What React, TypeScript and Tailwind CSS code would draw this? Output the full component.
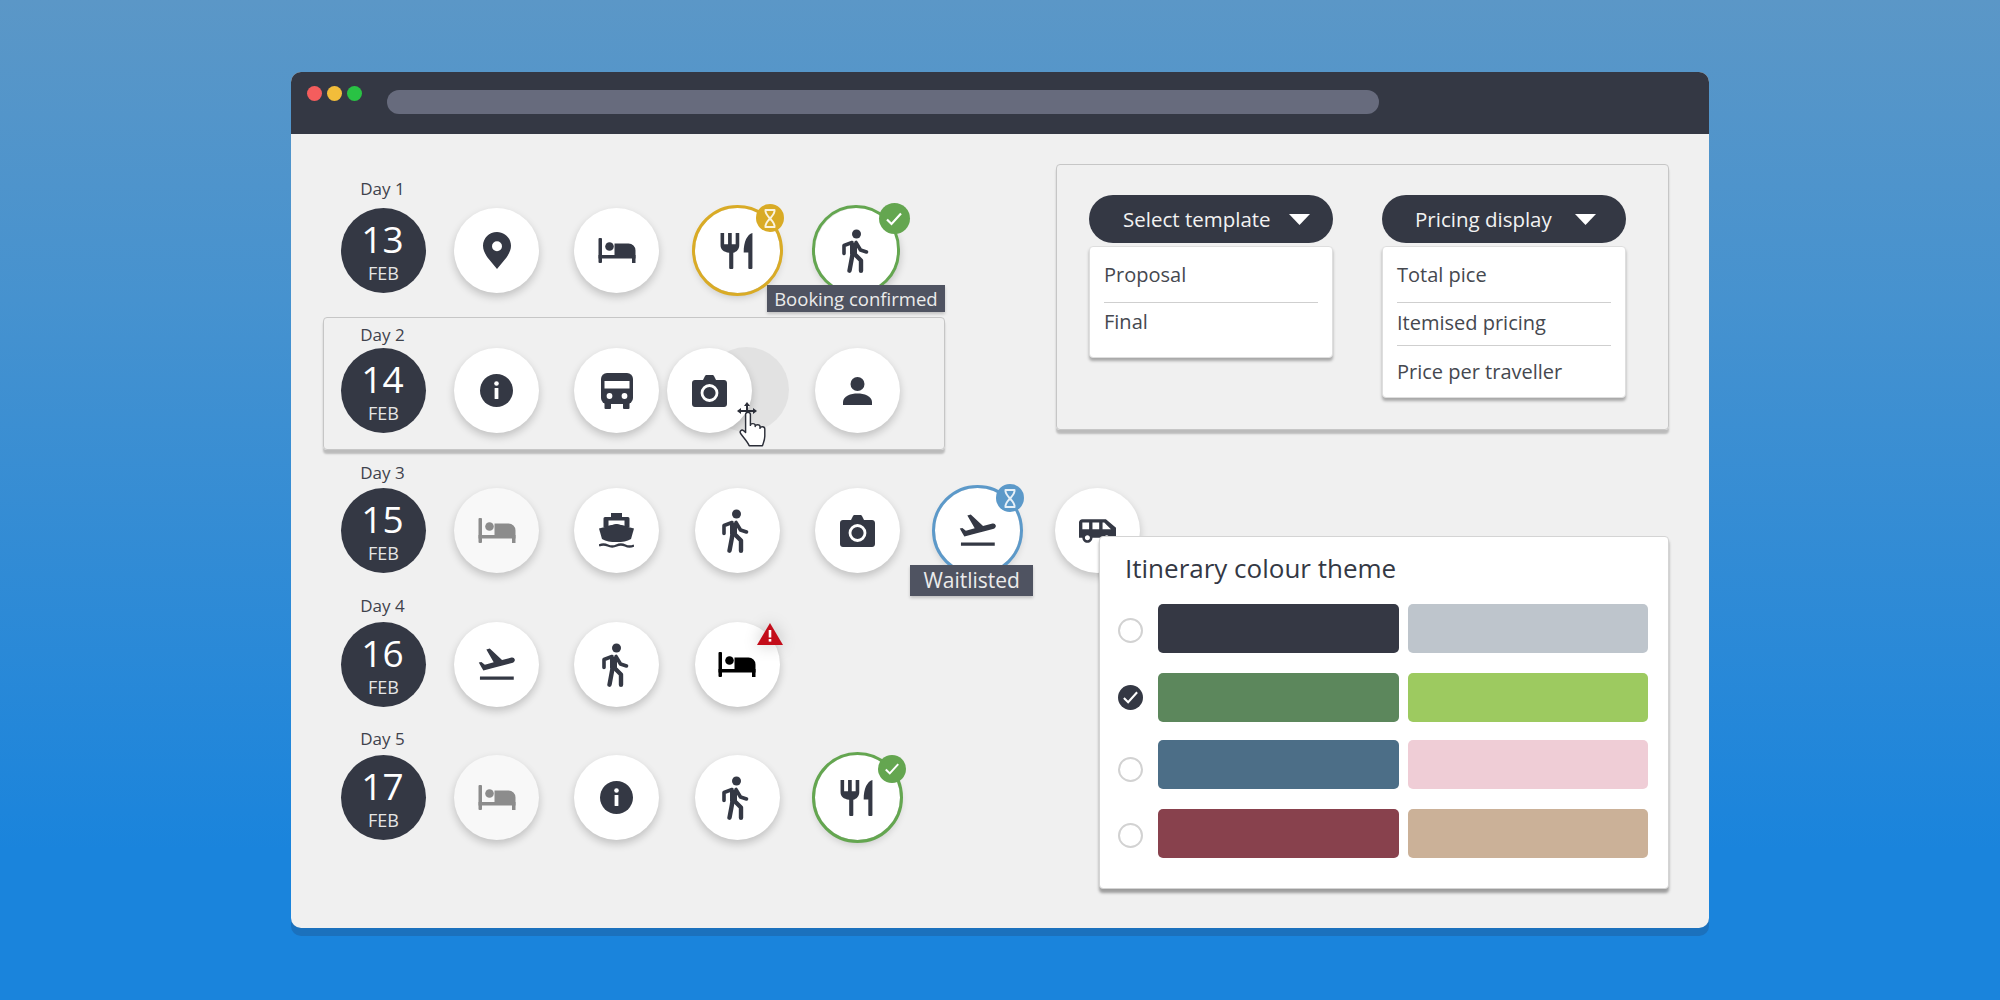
import React from "react";

const DARK = "#343844";

type IconProps = { c?: string };

const Pin = ({ c = DARK }: IconProps) => (
  <svg width="28" height="37" viewBox="0 0 28 37">
    <path fillRule="evenodd" fill={c} d="M14 0C6.3 0 0 6.1 0 13.8c0 4.2 2 8 4.5 11.6L14 37l9.5-11.600C26 21.800 28 18 28 13.800 28 6.100 21.700 0 14 0zm0 9.200a5 5 0 1 1 0 10 5 5 0 0 1 0-10z" />
  </svg>
);

const Bed = ({ c = DARK }: IconProps) => (
  <svg width="38" height="25" viewBox="0 0 37 25" fill={c}>
    <rect x="0" y="0" width="3.500" height="25" rx="1" />
    <rect x="0" y="17" width="37" height="3.500" />
    <circle cx="11" cy="8.500" r="4.300" />
    <path d="M16 5.500h14a7 7 0 0 1 7 7V25h-3.500v-6H16z" />
  </svg>
);

const Food = ({ c = DARK }: IconProps) => (
  <svg width="34" height="36" viewBox="0 0 32 35" fill={c}>
    <path d="M0 0h3.500v11h3.800V0h3.600v11h3.800V0h3.500v12c0 4-2.800 6.600-5.800 7.300V34a1 1 0 0 1-1 1h-2a1 1 0 0 1-1-1V19.300C2.800 18.600 0 16 0 12z" />
    <path d="M31 0c-5 1.500-8.500 8-8.500 19h4.500v15a1 1 0 0 0 1 1h2a1 1 0 0 0 1-1V0z" />
  </svg>
);

const Walker = ({ c = DARK }: IconProps) => (
  <svg width="28" height="44" viewBox="-1 0 28 43" fill="none" stroke={c} strokeLinejoin="round" strokeLinecap="round" className="-translate-x-[2px]">
    <circle cx="14.500" cy="4.500" r="4.500" fill={c} stroke="none" />
    <path d="M11.500 13.500v11.500" strokeWidth="7" strokeLinecap="butt" />
    <path d="M10 13L2 16v8" strokeWidth="3.600" />
    <path d="M14 13l4.500 7.500 6 2" strokeWidth="3.600" />
    <path d="M10.500 25L7.500 41.200" strokeWidth="4.400" />
    <path d="M13 25l6 6v10.200" strokeWidth="4.400" />
  </svg>
);

const Info = ({ c = DARK }: IconProps) => (
  <svg width="33" height="33" viewBox="0 0 33 33">
    <circle cx="16.500" cy="16.500" r="16.500" fill={c} />
    <circle cx="16.500" cy="9.500" r="2.300" fill="#fff" />
    <rect x="14.600" y="14" width="3.800" height="11" rx="0.600" fill="#fff" />
  </svg>
);

const Bus = ({ c = DARK }: IconProps) => (
  <svg width="32" height="36" viewBox="0 0 32 36" fill={c}>
    <rect x="0" y="0" width="32" height="31" rx="6" />
    <rect x="3.500" y="8" width="25" height="7.500" fill="#fff" />
    <circle cx="8.500" cy="23" r="2.900" fill="#fff" />
    <circle cx="23.500" cy="23" r="2.900" fill="#fff" />
    <rect x="3.500" y="29" width="6.500" height="7" rx="1" />
    <rect x="22" y="29" width="6.500" height="7" rx="1" />
  </svg>
);

const Camera = ({ c = DARK }: IconProps) => (
  <svg width="35" height="32" viewBox="0 0 35 32">
    <path fill={c} d="M11 5l2-4c.3-.6.8-1 1.500-1h6c.7 0 1.200.4 1.500 1l2 4h8c1.700 0 3 1.300 3 3v21c0 1.700-1.300 3-3 3H3c-1.700 0-3-1.300-3-3V8c0-1.700 1.300-3 3-3z" />
    <circle cx="17.500" cy="18" r="7.500" fill="none" stroke="#fff" strokeWidth="2.800" />
  </svg>
);

const Person = ({ c = DARK }: IconProps) => (
  <svg width="29" height="28" viewBox="0 0 29 28" fill={c}>
    <circle cx="14.500" cy="7" r="7" />
    <path d="M0 28v-3c0-6 8-8.500 14.500-8.500S29 19 29 25v3z" />
  </svg>
);

const Boat = ({ c = DARK }: IconProps) => (
  <svg width="35" height="35" viewBox="0 0 35 35" fill={c}>
    <rect x="12" y="0" width="11" height="6" />
    <path fillRule="evenodd" d="M6 4h23a1.500 1.500 0 0 1 1.500 1.500V14H4.500V5.500A1.500 1.500 0 0 1 6 4zm3.500 3.500v5.200L17.500 11l8 1.700V7.500z" />
    <path d="M0 15.500L17.500 11 35 15.500 32 26c-4 2.500-8.500 3-14.500 3S7 28.500 3 26z" />
    <path d="M0 32.500c3-1.400 5.800-1.400 8.800 0s5.800 1.400 8.700 0 5.800-1.400 8.700 0 5.800 1.400 8.800 0" fill="none" stroke={c} strokeWidth="2.400" />
  </svg>
);

const Plane = ({ c = DARK }: IconProps) => (
  <svg width="37" height="33" viewBox="1.400 3.500 20.800 18" fill={c}>
    <path d="M2.500 19.200h19v1.900h-19zm19.570-9.560c-.21-.8-1.040-1.280-1.840-1.060L14.920 10l-6.900-6.430-1.930.51 4.140 7.170-4.970 1.330-1.970-1.540-1.450.39 1.820 3.160.77 1.330 1.600-.43 5.310-1.420 4.350-1.160L21 11.490c.81-.23 1.280-1.050 1.070-1.850z" />
  </svg>
);

const Van = ({ c = DARK }: IconProps) => (
  <svg width="37" height="24" viewBox="1 5 22 14" fill={c}>
    <path d="M17 5H3c-1.100 0-2 .89-2 2v9h2c0 1.650 1.340 3 3 3s3-1.350 3-3h5.500c0 1.650 1.340 3 3 3s3-1.350 3-3H23v-6l-6-5zM3 11V7h4v4H3zm3 6.500c-.83 0-1.500-.67-1.500-1.500s.67-1.500 1.500-1.500 1.500.67 1.500 1.500-.67 1.500-1.500 1.500zm7-6.500H9V7h4v4zm4.500 6.500c-.83 0-1.500-.67-1.500-1.500s.67-1.500 1.500-1.500 1.500.67 1.500 1.500-.67 1.500-1.500 1.500zM15 11V7h1l4 4h-5z" />
  </svg>
);

const Hourglass = () => (
  <svg width="12" height="19" viewBox="0 0 12 19" fill="none" stroke="#fff" strokeOpacity="0.85" strokeWidth="2" strokeLinejoin="round">
    <path d="M1.500 1h9c.5 3.500-2 5.500-4.500 8.500 2.500 3 5 5 4.500 8.500h-9C1 14.500 3.500 12.500 6 9.500 3.500 6.500 1 4.500 1.500 1z" />
  </svg>
);

const Check = ({ s = 18 }: { s?: number }) => (
  <svg width={s} height={s} viewBox="0 0 18 18" fill="none" stroke="#fff" strokeWidth="2.200">
    <path d="M2 9.500l4.500 4.500L16 3.500" />
  </svg>
);

const Warning = () => (
  <svg width="26" height="22" viewBox="0 0 26 22" className="drop-shadow-[0_0_8px_rgba(0,0,0,0.22)]">
    <path d="M13 0L26 22H0z" fill="#c30d1a" />
    <rect x="11.700" y="7" width="2.600" height="7.500" fill="#fff" />
    <rect x="11.700" y="16" width="2.600" height="2.600" fill="#fff" />
  </svg>
);

const Circle = ({ children, faded }: { children?: React.ReactNode; faded?: boolean }) => (
  <div className={`relative flex h-[85px] w-[85px] shrink-0 items-center justify-center rounded-full shadow-[0_4px_8px_rgba(0,0,0,0.2)] ${faded ? "bg-[#f8f8f8]" : "bg-white"}`}>
    {children}
  </div>
);

const DateCircle = ({ d }: { d: string }) => (
  <div className="flex h-[85px] w-[85px] shrink-0 flex-col items-center rounded-full bg-[#343844] text-white">
    <span className="mt-[9px] h-[44px] -translate-x-[1px] text-[37px] font-normal leading-[44px]">{d}</span>
    <span className="mt-[1px] text-[18px] leading-[22px] text-[#e6e6e6]">FEB</span>
  </div>
);

const Label = ({ t }: { t: string }) => (
  <div className="h-[20px] w-[85px] -translate-x-[1px] whitespace-nowrap text-center text-[17px] leading-[20px] text-[#3f424c]">{t}</div>
);

const Tooltip = ({ children, className }: { children: React.ReactNode; className: string }) => (
  <div className={`absolute z-[5] flex items-center justify-center whitespace-nowrap bg-[#4f5361] text-[#ebebeb] shadow-[0_2px_3px_rgba(0,0,0,0.2)] ${className}`}>
    {children}
  </div>
);

const Triangle = () => (
  <svg width="21" height="11" viewBox="0 0 21 11" className="shrink-0">
    <path d="M0 0h21L10.500 11z" fill="#fff" />
  </svg>
);

const Cursor = () => (
  <div className="absolute left-[42px] top-[54px] z-[6] h-[46px] w-[34px]">
    <svg width="34" height="46" viewBox="0 0 34 46">
      <g fill="#2b2e38">
        <path d="M10 0l3 4H7z" />
        <path d="M0 9l4-3v6z" />
        <path d="M20 9l-4-3v6z" />
        <rect x="3" y="8" width="14" height="2" />
        <rect x="9" y="3" width="2" height="9" />
      </g>
      <path transform="translate(2 9) scale(1.200)" fill="#fff" stroke="#2b2e38" strokeWidth="1.200" strokeLinejoin="round" d="M5.500 3c0-2.500 4-2.500 4 0v9c0-2 4-2 4 0v1c0-2 4-2 4 0v1.500c0-2 4-2 4 .5v6c0 3-1 5-2 8H8.500c-1-3-4-6-7-10-1.500-2 .5-4 2.500-2.500l1.500 1.500z" />
    </svg>
  </div>
);

const Radio = ({ checked, className }: { checked?: boolean; className: string }) => (
  <div className={`flex h-[25px] w-[25px] shrink-0 items-center justify-center rounded-full ${checked ? "bg-[#343844]" : "border-2 border-[#d2d2d2] bg-white"} ${className}`}>
    {checked && <Check s={17} />}
  </div>
);

const Swatches = ({ a, b, className, radio, checked }: { a: string; b: string; className: string; radio: string; checked?: boolean }) => (
  <div className={`flex items-center ${className}`}>
    <Radio checked={checked} className={radio} />
    <div className={`ml-[15px] h-[49px] w-[241px] rounded-[5px] ${a}`} />
    <div className={`ml-[9px] h-[49px] w-[240px] rounded-[5px] ${b}`} />
  </div>
);

const Item = ({ children, className, divider }: { children: string; className: string; divider?: boolean }) => (
  <div className={`mx-[14px] flex items-center text-[20px] text-[#45484f] ${divider ? "border-b border-[#cfcfcf]" : ""} ${className}`}>
    {children}
  </div>
);

const PillButton = ({ children, className }: { children: string; className: string }) => (
  <div className={`flex h-[48px] w-[244px] items-center rounded-full bg-[#343844] pt-[1px] text-[20.500px] text-[#f2f2f2] ${className}`}>
    <span>{children}</span>
    <span className="ml-auto">
      <Triangle />
    </span>
  </div>
);

export default function App() {
  return (
    <div
      className="flex h-[1000px] w-[2000px] items-start bg-[linear-gradient(180deg,#5b97c7_0%,#4692cf_30%,#1a84dc_85%,#1a84dc_100%)] pl-[291px] pt-[72px]"
      style={{ fontFamily: '"Open Sans", "Liberation Sans", sans-serif' }}
    >
      <div className="flex h-[856px] w-[1418px] flex-col overflow-hidden rounded-[10px] bg-[#f0f0f0] shadow-[0_8px_0_#1b71bd]">
        <div className="flex h-[62px] shrink-0 items-start bg-[#343844] pl-[16px]">
          <div className="mt-[14px] flex gap-[5px]">
            <div className="h-[15px] w-[15px] rounded-full bg-[#f45d5d]" />
            <div className="h-[15px] w-[15px] rounded-full bg-[#f2bd3a]" />
            <div className="h-[15px] w-[15px] rounded-full bg-[#29c244]" />
          </div>
          <div className="ml-[25px] mt-[18px] h-[24px] w-[992px] rounded-full bg-[#676b7d]" />
        </div>

        <div className="flex flex-1">
          <div className="w-[765px] shrink-0 pl-[32px] pt-[45px]">
            {/* Day 1 */}
            <div className="px-[18px]">
              <Label t="Day 1" />
              <div className="mt-[9px] flex items-center">
                <DateCircle d="13" />
                <div className="ml-[28px] flex gap-[35.300px]">
                  <Circle><Pin /></Circle>
                  <Circle><Bed /></Circle>
                  <Circle>
                    <div className="absolute -inset-[3px] rounded-full border-[3px] border-[#d9ab26]" />
                    <Food />
                    <div className="absolute left-[61px] top-[-4px] flex h-[28px] w-[28px] items-center justify-center rounded-full bg-[#d9ab26]"><Hourglass /></div>
                  </Circle>
                  <Circle>
                    <div className="absolute -left-[3px] -top-[3px] h-[90px] w-[88px] rounded-full border-[3px] border-[#64a650]" />
                    <Walker />
                    <div className="absolute left-[64px] top-[-5px] flex h-[31px] w-[31px] items-center justify-center rounded-full bg-[#64a650]"><Check /></div>
                    <Tooltip className="left-[-48px] top-[77px] h-[27px] w-[178px] text-[18.500px]">Booking confirmed</Tooltip>
                  </Circle>
                </div>
              </div>
            </div>

            {/* Day 2 */}
            <div className="mt-[24px] h-[133px] w-[622px] rounded-[4px] border border-[#c6c6c6] px-[17px] pt-[7px] shadow-[0_4px_2px_rgba(0,0,0,0.22)]">
              <Label t="Day 2" />
              <div className="mt-[3px] flex items-center">
                <DateCircle d="14" />
                <div className="ml-[28px] flex gap-[35.300px]">
                  <Circle><Info /></Circle>
                  <Circle><Bus /></Circle>
                  <div className="relative h-[85px] w-[85px] shrink-0">
                    <div className="absolute left-[9px] top-[-1px] h-[85px] w-[85px] rounded-full bg-[#e2e2e2]" />
                    <div className="absolute left-[-28px] top-0">
                      <Circle><Camera /></Circle>
                    </div>
                    <Cursor />
                  </div>
                  <Circle><Person /></Circle>
                </div>
              </div>
            </div>

            {/* Day 3 */}
            <div className="mt-[13px] px-[18px]">
              <Label t="Day 3" />
              <div className="mt-[5px] flex items-center">
                <DateCircle d="15" />
                <div className="ml-[28px] flex gap-[35.300px]">
                  <Circle faded><Bed c="#8c8c8c" /></Circle>
                  <Circle><Boat /></Circle>
                  <Circle><Walker /></Circle>
                  <Circle><Camera /></Circle>
                  <Circle>
                    <div className="absolute -inset-[3px] rounded-full border-[3px] border-[#5c99c9]" />
                    <Plane />
                    <div className="absolute left-[61px] top-[-4px] flex h-[28px] w-[28px] items-center justify-center rounded-full bg-[#5c99c9]"><Hourglass /></div>
                    <Tooltip className="left-[-25px] top-[77px] h-[31px] w-[123px] text-[21px]">Waitlisted</Tooltip>
                  </Circle>
                  <Circle><Van /></Circle>
                </div>
              </div>
            </div>

            {/* Day 4 */}
            <div className="mt-[23px] px-[18px]">
              <Label t="Day 4" />
              <div className="mt-[6px] flex items-center">
                <DateCircle d="16" />
                <div className="ml-[28px] flex gap-[35.300px]">
                  <Circle><Plane /></Circle>
                  <Circle><Walker /></Circle>
                  <Circle>
                    <Bed c="#000000" />
                    <div className="absolute left-[62px] top-[1px] h-[22px] w-[26px]"><Warning /></div>
                  </Circle>
                </div>
              </div>
            </div>

            {/* Day 5 */}
            <div className="mt-[22px] px-[18px]">
              <Label t="Day 5" />
              <div className="mt-[6px] flex items-center">
                <DateCircle d="17" />
                <div className="ml-[28px] flex gap-[35.300px]">
                  <Circle faded><Bed c="#8c8c8c" /></Circle>
                  <Circle><Info /></Circle>
                  <Circle><Walker /></Circle>
                  <Circle>
                    <div className="absolute -inset-[3px] rounded-full border-[3px] border-[#64a650]" />
                    <Food />
                    <div className="absolute left-[63px] top-0 flex h-[28px] w-[28px] items-center justify-center rounded-full bg-[#64a650]"><Check s={16} /></div>
                  </Circle>
                </div>
              </div>
            </div>
          </div>

          <div className="relative z-10 flex w-[613px] shrink-0 flex-col items-end pt-[30px]">
            <div className="flex h-[266px] w-[613px] items-start gap-[49px] rounded-[4px] border border-[#c6c6c6] pl-[32px] pt-[30px] shadow-[0_4px_2px_rgba(0,0,0,0.22)]">
              <div className="w-[244px]">
                <PillButton className="pl-[34px] pr-[23px]">Select template</PillButton>
                <div className="mt-[3px] h-[112px] w-[244px] rounded-[4px] border border-[#dedede] bg-white shadow-[0_3px_3px_rgba(0,0,0,0.3)]">
                  <Item divider className="h-[56px]">Proposal</Item>
                  <Item className="h-[38px]">Final</Item>
                </div>
              </div>
              <div className="w-[244px]">
                <PillButton className="pl-[33px] pr-[30px]">Pricing display</PillButton>
                <div className="mt-[3px] h-[152px] w-[244px] rounded-[4px] border border-[#dedede] bg-white shadow-[0_3px_3px_rgba(0,0,0,0.3)]">
                  <Item divider className="h-[56px]">Total pice</Item>
                  <Item divider className="h-[43px] pb-[3px]">Itemised pricing</Item>
                  <Item className="h-[52px]">Price per traveller</Item>
                </div>
              </div>
            </div>

            <div className="mt-[106px] h-[353px] w-[570px] rounded-[4px] border border-[#d4d4d4] bg-white pl-[18px] shadow-[0_4px_3px_rgba(0,0,0,0.35)]">
              <div className="ml-[7px] mt-[14px] h-[34px] whitespace-nowrap text-[26px] font-medium leading-[34px] text-[#343844]">Itinerary colour theme</div>
              <Swatches className="mt-[19px]" radio="translate-y-[2px]" a="bg-[#353844]" b="bg-[#bec5cc]" />
              <Swatches className="mt-[20px]" radio="" checked a="bg-[#5c875c]" b="bg-[#9dca60]" />
              <Swatches className="mt-[18px]" radio="translate-y-[5px]" a="bg-[#4c6e87]" b="bg-[#efcdd6]" />
              <Swatches className="mt-[20px]" radio="translate-y-[2px]" a="bg-[#88414d]" b="bg-[#cbb198]" />
            </div>
          </div>
        </div>
      </div>
    </div>
  );
}
